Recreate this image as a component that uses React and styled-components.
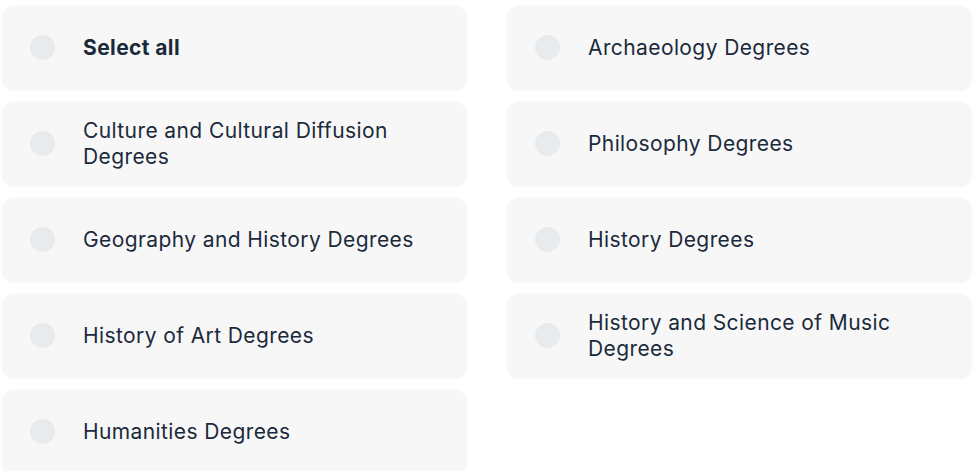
import React from "react";
import styled, { createGlobalStyle } from "styled-components";

const Global = createGlobalStyle`
	body {
		margin: 0;
		background: #ffffff;
		font-family: "Inter", "Liberation Sans", sans-serif;
	}
`;

const Grid = styled.div`
	display: grid;
	grid-template-columns: 465px 465px;
	column-gap: 40px;
	row-gap: 11px;
	padding: 6px 0 0 2px;
`;

const Option = styled.label`
	display: flex;
	align-items: center;
	height: 85px;
	box-sizing: border-box;
	padding: 0 28px 2px;
	background: #f7f7f8;
	border-radius: 12px;
	box-shadow: 0 0 3px rgba(0, 0, 0, 0.03);
	cursor: pointer;
`;

const Dot = styled.span`
	flex: none;
	width: 25px;
	height: 25px;
	border-radius: 50%;
	background: #e8ebed;
	margin-right: 28px;
`;

const Label = styled.span`
	font-size: 21px;
	line-height: 26px;
	letter-spacing: 0.4px;
	color: #1b2a3b;
	font-weight: ${p => (p.bold ? 700 : 400)};
`;

const items = [
	{ text: "Select all", bold: true },
	{ text: "Archaeology Degrees" },
	{ text: "Culture and Cultural Diffusion Degrees" },
	{ text: "Philosophy Degrees" },
	{ text: "Geography and History Degrees" },
	{ text: "History Degrees" },
	{ text: "History of Art Degrees" },
	{ text: "History and Science of Music Degrees" },
	{ text: "Humanities Degrees" }
];

const App = () => (
	<>
		<Global />
		<Grid>
			{items.map(item => (
				<Option key={item.text}>
					<Dot />
					<Label bold={item.bold}>{item.text}</Label>
				</Option>
			))}
		</Grid>
	</>
);

export default App;
